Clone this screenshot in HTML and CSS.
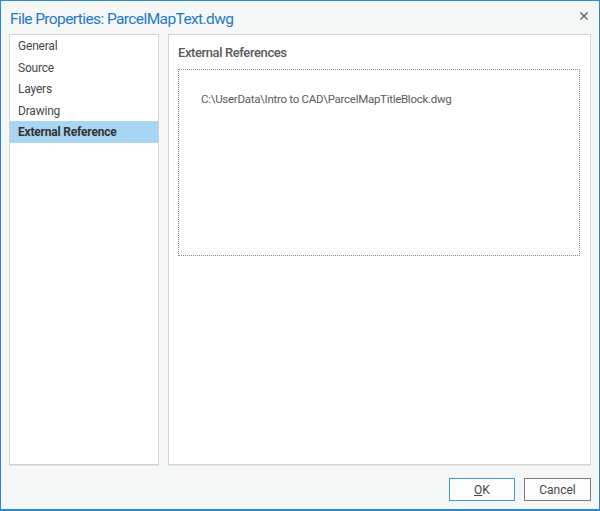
FILE: index.html
```html
<!DOCTYPE html>
<html lang="en">
<head>
<meta charset="utf-8">
<title>File Properties</title>
<link rel="stylesheet" href="styles.css">
</head>
<body>
<div class="window">
  <div class="titlebar">
    <div class="title">File Properties: ParcelMapText.dwg</div>
    <div class="close" aria-label="Close">
      <svg width="10" height="10" viewBox="0 0 10 10"><path d="M1.5 1.5 L8.5 8.5 M8.5 1.5 L1.5 8.5" stroke="#5a5a5a" stroke-width="1.3" fill="none"/></svg>
    </div>
  </div>
  <div class="content">
    <ul class="nav">
      <li class="nav-item">General</li>
      <li class="nav-item">Source</li>
      <li class="nav-item">Layers</li>
      <li class="nav-item">Drawing</li>
      <li class="nav-item selected">External Reference</li>
    </ul>
    <div class="page">
      <div class="heading">External References</div>
      <div class="refbox">
        <div class="refpath">C:\UserData\Intro to CAD\ParcelMapTitleBlock.dwg</div>
      </div>
    </div>
  </div>
  <div class="footer">
    <button class="btn btn-default"><span class="ak">O</span>K</button>
    <button class="btn">Cancel</button>
  </div>
</div>
</body>
</html>
```

FILE: styles.css
```css
* { box-sizing: border-box; }
html, body { margin: 0; padding: 0; }
body {
  font-family: "Roboto", "Liberation Sans", sans-serif;
  background: #ffffff;
}
.window {
  width: 600px;
  height: 511px;
  border: 1px solid #2b88d1;
  border-bottom-width: 2px;
  background: #f5f6f6;
  display: flex;
  flex-direction: column;
}
.titlebar {
  height: 33px;
  display: flex;
  align-items: flex-start;
  justify-content: space-between;
  padding: 0 10px 0 9px;
}
.title {
  font-size: 15.5px;
  letter-spacing: -0.6px;
  color: #1f7bc5;
  line-height: 20px;
  margin-top: 8px;
}
.close {
  margin-top: 10px;
  width: 10px;
  height: 10px;
  display: flex;
}
.content {
  display: flex;
  gap: 9px;
  padding: 0 8px;
  height: 431px;
}
.nav {
  list-style: none;
  margin: 0;
  padding: 0;
  width: 150px;
  height: 100%;
  background: #fff;
  border: 1px solid #d4d4d4;
  border-bottom-color: #cfcfcf;
  box-shadow: 0 1px 0 #e6e6e6;
}
.nav-item {
  height: 21.5px;
  line-height: 22px;
  padding-left: 8px;
  font-size: 12px;
  letter-spacing: -0.2px;
  color: #484848;
}
.nav-item.selected {
  background: #a8d6f2;
  font-weight: bold;
  color: #333;
}
.page {
  flex: 1;
  height: 100%;
  background: #fff;
  border: 1px solid #d4d4d4;
  box-shadow: 0 1px 0 #e6e6e6;
  padding: 9px 10px 0 9px;
}
.heading {
  font-size: 13px;
  font-weight: 500;
  letter-spacing: -0.4px;
  color: #5a5a5a;
  line-height: 17px;
  height: 25px;
}
.refbox {
  height: 187px;
  border: 1px dotted #8a8a8a;
  padding: 21px 0 0 22px;
}
.refpath {
  font-size: 11.5px;
  letter-spacing: -0.28px;
  color: #5c5c5c;
  line-height: 16px;
}
.footer {
  display: flex;
  justify-content: flex-end;
  gap: 9px;
  padding: 13px 8px 0 0;
}
.btn {
  width: 66px;
  height: 23px;
  font-family: inherit;
  font-size: 12px;
  color: #444;
  background: #fdfdfd;
  border: 1px solid #7d7d7d;
  border-radius: 0;
  padding: 0;
}
.btn + .btn { width: 67px; }
.btn-default { border-color: #3d97dc; }
.ak { text-decoration: underline; }
```
